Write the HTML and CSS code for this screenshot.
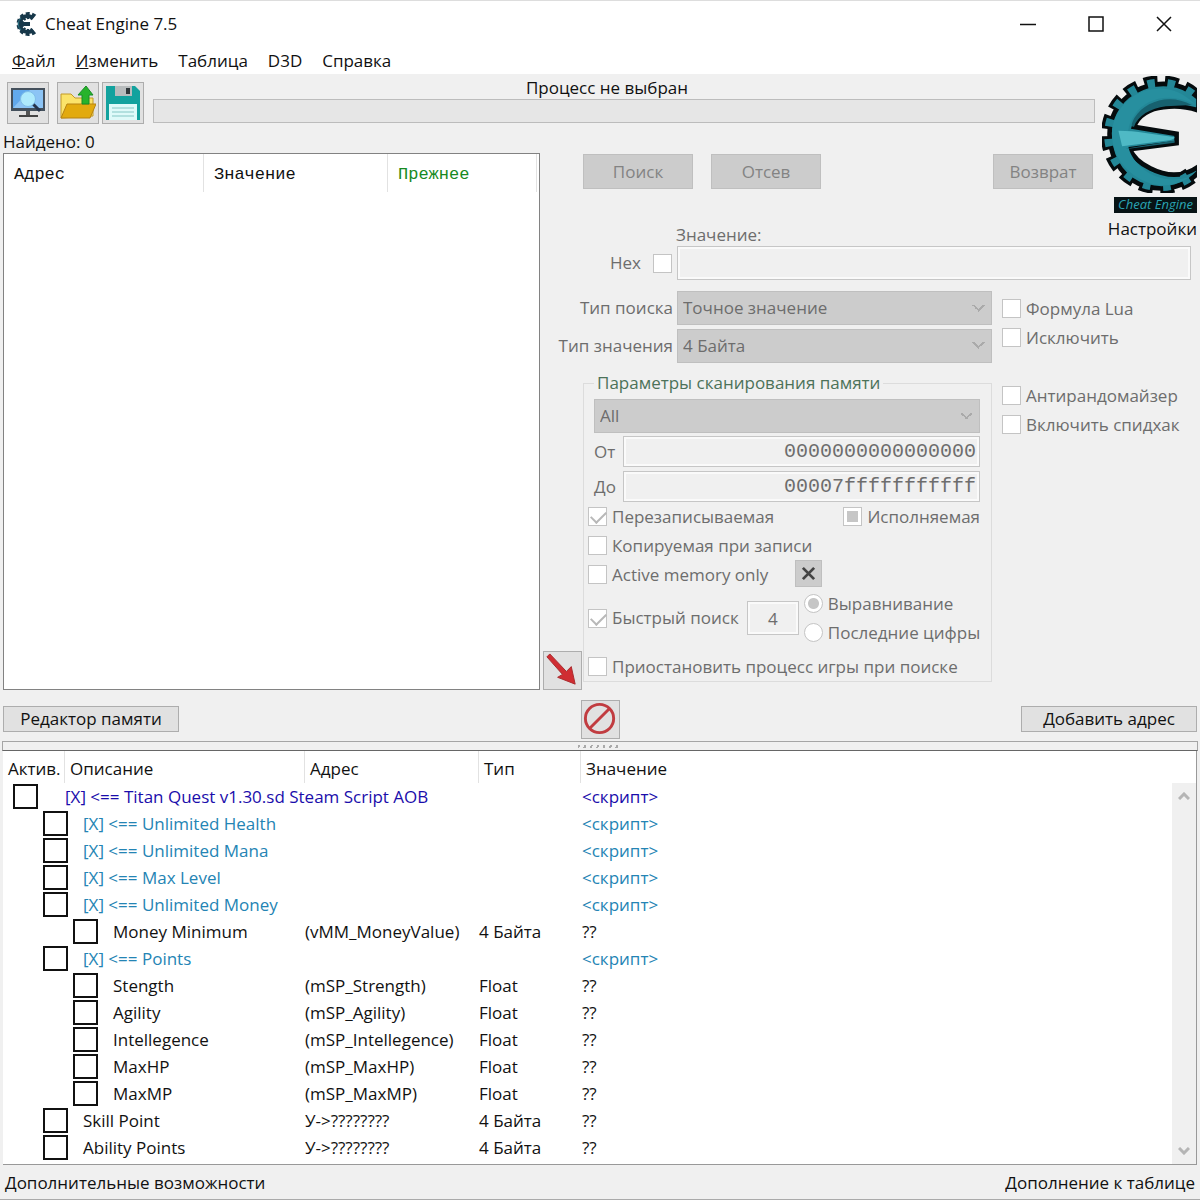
FILE: index.html
```
<!DOCTYPE html>
<html lang="ru">
<head>
    <meta charset="UTF-8">
    <meta name="viewport" content="width=device-width, initial-scale=1.0">
    <title>Cheat Engine 7.5</title>
    <link rel="stylesheet" href="styles.css">
</head>
<body>
    <header class="titlebar">
        <svg class="app-icon" viewBox="0 0 24 24">
            <path d="M21 5.500A8.500 8.500 0 1 0 21 18.500" fill="none" stroke="#17384a" stroke-width="7" stroke-dasharray="3 2"/>
            <path d="M20 6A8 8 0 1 0 20 18M6 12h11" fill="none" stroke="#17384a" stroke-width="4"/>
            <path d="M8 6A8 8 0 0 0 8 18" fill="none" stroke="#2a7486" stroke-width="1"/>
        </svg>
        <h1>Cheat Engine 7.5</h1>
        <div class="window-buttons">
            <button type="button" aria-label="Свернуть"><svg viewBox="0 0 18 18"><path d="M1 9.500h16"/></svg></button>
            <button type="button" aria-label="Развернуть"><svg viewBox="0 0 18 18"><path d="M2 2h14v14H2z"/></svg></button>
            <button type="button" aria-label="Закрыть"><svg viewBox="0 0 18 18"><path d="M2 2l14 14M16 2L2 16"/></svg></button>
        </div>
    </header>

    <nav class="menu">
        <a href="#"><u>Ф</u>айл</a>
        <a href="#"><u>И</u>зменить</a>
        <a href="#">Таблица</a>
        <a href="#">D3D</a>
        <a href="#">Справка</a>
    </nav>

    <main class="workspace">
        <div class="toolbar">
            <button type="button" class="tool" aria-label="Выбрать процесс">
                <svg viewBox="0 0 36 36">
                    <path d="M1 3h34v23H1z" fill="#44505c"/>
                    <path d="M3 5h30v18H3z" fill="#62a9ec"/>
                    <path d="M3 23L20 5h13v18z" fill="#8cc4f5"/>
                    <path d="M16 26h4v5h-4z" fill="#555"/>
                    <path d="M9 30h19v2H9z" fill="#444"/>
                    <path d="M23 19l7 7" stroke="#26334a" stroke-width="3"/>
                    <circle cx="18" cy="14" r="7.500" fill="#aeeafc" stroke="#80bfe9" stroke-width="1"/>
                </svg>
            </button>
            <button type="button" class="tool tool-open" aria-label="Открыть">
                <svg viewBox="0 0 36 36">
                    <path d="M1 33V9h10l4 4h18v18z" fill="#fbe36a" stroke="#c29a28" stroke-width="1"/>
                    <path d="M7 19h29l-6 14H1z" fill="#e2aa0e" stroke="#b78312" stroke-width="1"/>
                    <path d="M26 1l7 9h-4v9h-7v-9h-4z" fill="#27b32b" stroke="#188c26" stroke-width="1"/>
                </svg>
            </button>
            <button type="button" class="tool" aria-label="Сохранить">
                <svg viewBox="0 0 36 36">
                    <path d="M1 1h29l5 5v29H1z" fill="#13a29e"/>
                    <path d="M10 1h17v10H10z" fill="#b8bcbd"/>
                    <path d="M21 3h4v6h-4z" fill="#30373a"/>
                    <path d="M4 19h28v16H4z" fill="#dffaf9"/>
                    <path d="M7 23h22M7 27h22M7 31h22" stroke="#84c7c5" stroke-width="1"/>
                </svg>
            </button>
            <div class="process">
                <span id="process-name">Процесс не выбран</span>
                <div class="progress" role="progressbar" aria-labelledby="process-name"></div>
            </div>
        </div>

        <div class="settings">
            <svg class="logo" viewBox="0 0 285 352">
                <path d="M276 62A153 153 0 1 0 276 292" fill="none" stroke="#050b0d" stroke-width="52" stroke-dasharray="38 21"/>
                <path d="M290 66C240 15 160 12 97 47C44 79 18 132 23 188C27 255 70 316 133 332C192 348 251 333 290 290V272C247 303 196 304 145 278C112 262 91 240 84 220L224 202L224 174L96 153C109 117 145 98 185 94C225 88 252 91 290 104Z" fill="#238797" stroke="#050b0d" stroke-width="14"/>
                <path d="M276 62A153 153 0 1 0 276 292" fill="none" stroke="#238797" stroke-width="32" stroke-dasharray="22 37" stroke-dashoffset="-8"/>
                <path d="M30 185C24 110 88 40 165 38C210 36 246 52 280 86C210 48 132 65 99 115C77 148 80 160 76 190C77 240 113 282 164 302C198 316 238 312 266 302C222 334 162 338 112 309C64 281 33 237 30 185Z" fill="#278f9f"/>
                <path d="M270 87C205 51 128 75 98 125C87 145 86 153 96 153C107 119 145 97 192 91Z" fill="#17616f"/>
                <path d="M49 165C103 165 155 176 218 184C218 188 212 191 202 193L60 211Z" fill="#4fb9c5"/>
                <path d="M70 219L218 194v7L86 218z" fill="#17616f"/>
            </svg>
            <span class="logo-name">Cheat Engine</span>
            <a href="#">Настройки</a>
        </div>

        <section class="found">
            <p>Найдено: 0</p>
            <div class="found-list">
                <table>
                    <thead><tr><th>Адрес</th><th>Значение</th><th class="previous">Прежнее</th></tr></thead>
                </table>
            </div>
        </section>

        <div class="scan-buttons">
            <button type="button" disabled>Поиск</button>
            <button type="button" disabled>Отсев</button>
            <button type="button" class="undo" disabled>Возврат</button>
            <label for="value">Значение:</label>
        </div>

        <form class="scan">
            <div class="value-row">
                <label for="hex">Hex</label>
                <input type="checkbox" id="hex" disabled>
                <input type="text" id="value" disabled>
            </div>
            <div class="types">
                <label for="scan-type">Тип поиска</label>
                <select id="scan-type" disabled><option>Точное значение</option></select>
                <label for="value-type">Тип значения</label>
                <select id="value-type" disabled><option>4 Байта</option></select>
            </div>
            <div class="memory">
                <button type="button" class="add-found" aria-label="Добавить в таблицу">
                    <svg viewBox="0 0 38 38"><path d="M3 5l3-3 17 18 5-5 4 18-18-7 5-3z" fill="#d02d32" stroke="#a92b2e" stroke-width="1"/></svg>
                </button>
                <fieldset disabled>
                    <legend>Параметры сканирования памяти</legend>
                    <select class="region" aria-label="Регион"><option>All</option></select>
                    <div class="range">
                        <label for="from">От</label>
                        <input type="text" id="from" value="0000000000000000">
                        <label for="to">До</label>
                        <input type="text" id="to" value="00007fffffffffff">
                    </div>
                    <div class="checks">
                        <div class="check-row">
                            <label class="check"><input type="checkbox" checked>Перезаписываемая</label>
                            <label class="check"><input type="checkbox" class="partial">Исполняемая</label>
                        </div>
                        <label class="check"><input type="checkbox">Копируемая при записи</label>
                        <div class="check-row active-row">
                            <label class="check"><input type="checkbox">Active memory only</label>
                            <button type="button" class="clear" aria-label="Сбросить"><svg viewBox="0 0 16 16"><path d="M2 2l12 12M14 2L2 14"/></svg></button>
                        </div>
                        <div class="fast">
                            <label class="check"><input type="checkbox" checked>Быстрый поиск</label>
                            <input type="text" class="step" aria-label="Шаг" value="4">
                            <div class="radios">
                                <label class="check"><input type="radio" name="align" checked>Выравнивание</label>
                                <label class="check"><input type="radio" name="align">Последние цифры</label>
                            </div>
                        </div>
                        <label class="check pause"><input type="checkbox">Приостановить процесс игры при поиске</label>
                    </div>
                </fieldset>
            </div>
            <div class="options">
                <label class="check"><input type="checkbox" disabled>Формула Lua</label>
                <label class="check"><input type="checkbox" disabled>Исключить</label>
                <label class="check second"><input type="checkbox" disabled>Антирандомайзер</label>
                <label class="check"><input type="checkbox" disabled>Включить спидхак</label>
            </div>
        </form>
    </main>

    <div class="actions">
        <button type="button" class="wide">Редактор памяти</button>
        <button type="button" class="stop" aria-label="Очистить список">
            <svg viewBox="0 0 38 38"><circle cx="18" cy="18" r="14.500"/><path d="M28 8L8 28"/></svg>
        </button>
        <button type="button" class="wide">Добавить адрес</button>
    </div>
    <div class="splitter"><span></span></div>

    <section class="cheats">
        <table>
            <thead>
                <tr><th class="col-active">Актив.</th><th class="col-name">Описание</th><th class="col-address">Адрес</th><th class="col-type">Тип</th><th>Значение</th></tr>
            </thead>
            <tbody>
                <tr class="root"><td><input type="checkbox" aria-label="Titan Quest"></td><td>[X] &lt;== Titan Quest v1.30.sd Steam Script AOB</td><td></td><td></td><td>&lt;скрипт&gt;</td></tr>
                <tr class="level1 script"><td><input type="checkbox" aria-label="Unlimited Health"></td><td>[X] &lt;== Unlimited Health</td><td></td><td></td><td>&lt;скрипт&gt;</td></tr>
                <tr class="level1 script"><td><input type="checkbox" aria-label="Unlimited Mana"></td><td>[X] &lt;== Unlimited Mana</td><td></td><td></td><td>&lt;скрипт&gt;</td></tr>
                <tr class="level1 script"><td><input type="checkbox" aria-label="Max Level"></td><td>[X] &lt;== Max Level</td><td></td><td></td><td>&lt;скрипт&gt;</td></tr>
                <tr class="level1 script"><td><input type="checkbox" aria-label="Unlimited Money"></td><td>[X] &lt;== Unlimited Money</td><td></td><td></td><td>&lt;скрипт&gt;</td></tr>
                <tr class="level2"><td><input type="checkbox" aria-label="Money Minimum"></td><td>Money Minimum</td><td>(vMM_MoneyValue)</td><td>4 Байта</td><td>??</td></tr>
                <tr class="level1 script"><td><input type="checkbox" aria-label="Points"></td><td>[X] &lt;== Points</td><td></td><td></td><td>&lt;скрипт&gt;</td></tr>
                <tr class="level2"><td><input type="checkbox" aria-label="Stength"></td><td>Stength</td><td>(mSP_Strength)</td><td>Float</td><td>??</td></tr>
                <tr class="level2"><td><input type="checkbox" aria-label="Agility"></td><td>Agility</td><td>(mSP_Agility)</td><td>Float</td><td>??</td></tr>
                <tr class="level2"><td><input type="checkbox" aria-label="Intellegence"></td><td>Intellegence</td><td>(mSP_Intellegence)</td><td>Float</td><td>??</td></tr>
                <tr class="level2"><td><input type="checkbox" aria-label="MaxHP"></td><td>MaxHP</td><td>(mSP_MaxHP)</td><td>Float</td><td>??</td></tr>
                <tr class="level2"><td><input type="checkbox" aria-label="MaxMP"></td><td>MaxMP</td><td>(mSP_MaxMP)</td><td>Float</td><td>??</td></tr>
                <tr class="level1"><td><input type="checkbox" aria-label="Skill Point"></td><td>Skill Point</td><td>У-&gt;????????</td><td>4 Байта</td><td>??</td></tr>
                <tr class="level1"><td><input type="checkbox" aria-label="Ability Points"></td><td>Ability Points</td><td>У-&gt;????????</td><td>4 Байта</td><td>??</td></tr>
            </tbody>
        </table>
        <div class="scrollbar">
            <svg viewBox="0 0 12 8"><path d="M1 7l5-5 5 5"/></svg>
            <svg viewBox="0 0 12 8"><path d="M1 1l5 5 5-5"/></svg>
        </div>
    </section>

    <footer class="status">
        <a href="#">Дополнительные возможности</a>
        <a href="#">Дополнение к таблице</a>
    </footer>
</body>
</html>
```
FILE: styles.css
```
* {
    box-sizing: border-box;
}

body {
    margin: 0;
    min-height: 100vh;
    display: flex;
    flex-direction: column;
    background: #f0f0f0;
    color: #111;
    font-family: "Open Sans", "Noto Sans", sans-serif;
    font-size: 17px;
    line-height: 20px;
}

button, input, select {
    font: inherit;
    color: inherit;
    margin: 0;
    border-radius: 0;
}

button {
    padding: 0;
    background: #e1e1e1;
    border: 1px solid #adadad;
}

a {
    color: inherit;
    text-decoration: none;
}

svg {
    display: block;
}

/* Title and menu */
.titlebar {
    display: flex;
    align-items: center;
    height: 46px;
    padding: 0 2px 0 13px;
    background: #fff;
    border-top: 1px solid #ddd;
}

.titlebar h1 {
    flex: 1;
    margin: 0 0 0 8px;
    font-size: 17px;
    font-weight: normal;
}

.app-icon {
    width: 24px;
    height: 24px;
}

.window-buttons {
    display: flex;
}

.window-buttons button {
    width: 68px;
    height: 40px;
    padding: 0 25px;
    background: none;
    border: none;
}

.window-buttons svg {
    width: 18px;
    height: 18px;
    fill: none;
    stroke: #111;
    stroke-width: 1.5;
}

.menu {
    display: flex;
    gap: 20px;
    height: 28px;
    padding: 5px 12px 3px;
    background: #fff;
}

/* Upper half */
.workspace {
    display: grid;
    grid-template-columns: 45% minmax(0, 1fr) 98px;
    grid-template-rows: 58px 114px auto;
    grid-template-areas:
        "tools tools logo"
        "found buttons logo"
        "found scan scan";
}

.toolbar {
    grid-area: tools;
    display: flex;
    align-items: flex-start;
    padding: 8px 7px 0;
}

.tool {
    width: 42px;
    height: 42px;
    padding: 2px;
}

.tool-open {
    margin: 0 3px 0 8px;
}

.process {
    flex: 1;
    margin-left: 9px;
    text-align: center;
}

.process span {
    display: block;
    height: 17px;
    padding-right: 34px;
    line-height: 12px;
}

.progress {
    height: 24px;
    background: #e6e6e6;
    border: 1px solid #bcbcbc;
}

.settings {
    grid-area: logo;
    display: flex;
    flex-direction: column;
    align-items: flex-end;
    padding: 2px 3px 0 0;
}

.logo {
    width: 95px;
    height: 117px;
}

.logo-name {
    width: 83px;
    height: 16px;
    margin: 4px 0 6px;
    background: #071315;
    color: #2aa3b3;
    font-size: 13px;
    font-style: italic;
    line-height: 14px;
    text-align: center;
    white-space: nowrap;
}

.found {
    grid-area: found;
    display: flex;
    flex-direction: column;
    padding-left: 3px;
}

.found p {
    margin: 0;
    height: 21px;
}

.found-list {
    flex: 1;
    background: #fff;
    border: 1px solid #828282;
    padding-right: 2px;
}

.found-list table {
    width: 100%;
    table-layout: fixed;
    border-spacing: 0;
    font-family: "Liberation Mono", monospace;
}

.found-list th {
    width: 184px;
    height: 38px;
    padding: 3px 0 0 10px;
    font-weight: normal;
    text-align: left;
    border-right: 1px solid #e2e2e2;
}

.found-list th:first-child {
    width: 200px;
}

.found-list .previous {
    width: auto;
    color: #178a22;
}

.scan-buttons {
    grid-area: buttons;
    display: grid;
    grid-template-columns: 110px 110px minmax(0, 1fr);
    grid-template-rows: 35px 1fr;
    column-gap: 18px;
    padding: 22px 9px 0 43px;
    color: #6d6d6d;
}

.scan-buttons button {
    background: #ccc;
    border-color: #bfbfbf;
    color: #838383;
}

.scan-buttons .undo {
    width: 100px;
    justify-self: end;
}

.scan-buttons label {
    grid-column: 1 / -1;
    align-self: end;
    padding: 0 0 1px 93px;
}

/* Scan form */
.scan {
    grid-area: scan;
    display: grid;
    grid-template-columns: minmax(0, 1fr) 198px;
    column-gap: 10px;
    grid-template-rows: 34px 72px auto;
    row-gap: 11px;
    color: #6d6d6d;
}

.value-row {
    grid-column: 1 / -1;
    display: flex;
    align-items: center;
    padding: 0 9px 0 70px;
}

.value-row label {
    width: 43px;
}

input[type="text"] {
    min-width: 0;
    background: #f0f0f0;
    border: 1px solid #c6c6c6;
    box-shadow: inset 0 0 0 2px #fafafa;
}

#value {
    flex: 1;
    height: 34px;
    margin-left: 5px;
}

input[type="checkbox"], input[type="radio"] {
    flex: none;
    appearance: none;
    width: 19px;
    height: 19px;
    background: #fff;
    border: 1px solid #c4c4c4;
}

input[type="radio"] {
    border-radius: 50%;
}

input[type="radio"]:checked {
    background: radial-gradient(circle, #c6c6c6 5px, #fff 6px);
}

.check input[type="checkbox"]:checked::before {
    content: "";
    display: block;
    width: 13px;
    height: 7px;
    margin: 3px 0 0 2px;
    border: solid #b8b8b8;
    border-width: 0 0 2px 2px;
    transform: rotate(-45deg);
}

.check input.partial {
    background: linear-gradient(#c6c6c6, #c6c6c6) center / 11px 11px no-repeat #fff;
}

.types {
    display: grid;
    grid-template-columns: 133px minmax(0, 1fr);
    column-gap: 4px;
    row-gap: 3px;
    align-items: center;
    text-align: right;
}

select {
    appearance: none;
    width: 100%;
    height: 34px;
    padding: 0 5px;
    border: 1px solid #bfbfbf;
    background-color: #ccc;
    background-image: linear-gradient(45deg, transparent 50%, #aaa 50%, #aaa 65%, transparent 65%), linear-gradient(-45deg, transparent 50%, #aaa 50%, #aaa 65%, transparent 65%);
    background-position: right 12px center, right 6px center;
    background-size: 7px 7px;
    background-repeat: no-repeat;
}

select:disabled, input:disabled {
    color: #6d6d6d;
    opacity: 1;
}

.memory {
    grid-column: 1;
    display: flex;
    align-items: flex-end;
}

.add-found {
    flex: none;
    width: 39px;
    height: 39px;
    margin: 0 1px 0 3px;
}

fieldset {
    flex: 1;
    min-width: 0;
    margin: 0 0 8px;
    padding: 7px 11px 0 10px;
    border: 1px solid #dcdcdc;
}

legend {
    padding: 0 3px;
    color: #4c7259;
    font-weight: 500;
    line-height: 18px;
}

.range {
    display: grid;
    grid-template-columns: 29px minmax(0, 1fr);
    row-gap: 4px;
    align-items: center;
    margin-top: 3px;
}

.range input {
    width: 100%;
    height: 31px;
    padding: 0 3px;
    font-family: "Liberation Mono", monospace;
    font-size: 20px;
    text-align: right;
}

.checks {
    margin: 0 -11px 0 -6px;
}

.check {
    display: flex;
    align-items: center;
    gap: 5px;
    height: 29px;
    white-space: nowrap;
}

.check-row {
    display: flex;
    justify-content: space-between;
    padding-right: 11px;
}

.active-row {
    justify-content: flex-start;
    gap: 27px;
}

.clear {
    width: 27px;
    height: 27px;
    padding: 5px;
    background: #ccc;
    border-color: #bfbfbf;
}

.clear svg {
    stroke: #444;
    stroke-width: 3;
}

.fast {
    display: flex;
    align-items: center;
}

.step {
    width: 52px;
    height: 34px;
    margin: 0 5px 0 8px;
    text-align: center;
}

.pause {
    margin-top: 5px;
}

.options {
    grid-column: 2;
    grid-row: 2 / 4;
    padding-top: 3px;
}

.options .second {
    margin-top: 29px;
}

/* Buttons between the two halves */
.actions {
    display: grid;
    grid-template-columns: 1fr auto 1fr;
    align-items: center;
    height: 51px;
    padding: 7px 3px 0;
}

.wide {
    width: 176px;
    height: 26px;
    line-height: 22px;
}

.wide:last-child {
    justify-self: end;
}

.stop {
    width: 39px;
    height: 39px;
}

.stop svg {
    fill: none;
    stroke: #c13c40;
    stroke-width: 3;
}

.splitter {
    display: flex;
    justify-content: center;
    align-items: center;
    height: 10px;
    margin: 0 2px;
    border: 1px solid #a5a5a5;
    border-bottom: 1px solid #666;
}

.splitter span {
    width: 44px;
    height: 3px;
    background: repeating-linear-gradient(110deg, #aaa 0 2px, #f0f0f0 2px 6px);
}

/* Cheat table */
.cheats {
    flex: 1;
    display: flex;
    margin: 0 3px;
    background: #fff;
    border-right: 1px solid #999;
    border-bottom: 1px solid #999;
}

.cheats table {
    flex: 1;
    align-self: flex-start;
    width: 100%;
    table-layout: fixed;
    border-spacing: 0;
    white-space: nowrap;
}

.cheats th {
    height: 32px;
    padding: 4px 0 0 5px;
    font-weight: normal;
    text-align: left;
    border-right: 1px solid #e2e2e2;
}

.cheats th:last-child {
    border: none;
}

.cheats .col-active { width: 62px; }
.cheats .col-name { width: 240px; }
.cheats .col-address { width: 174px; }
.cheats .col-type { width: 102px; }

.cheats td {
    height: 27px;
    padding: 0;
}

.cheats td:last-child {
    padding-left: 1px;
}

.cheats td input {
    display: block;
    width: 25px;
    height: 25px;
    margin-left: 10px;
    border: 2px solid #111;
}

.cheats .level1 input { margin-left: 40px; }
.cheats .level2 input { margin-left: 70px; }

.level1 td:nth-child(2) { padding-left: 18px; }
.level2 td:nth-child(2) { padding-left: 48px; }

.root { color: #1a0dab; }
.script { color: #2484b4; }

.scrollbar {
    display: flex;
    flex: none;
    flex-direction: column;
    justify-content: space-between;
    align-items: center;
    width: 24px;
    margin-top: 32px;
    padding: 9px 0;
    background: #f0f0f0;
}

.scrollbar svg {
    width: 12px;
    height: 8px;
    fill: none;
    stroke: #b5b5b5;
    stroke-width: 3;
}

.status {
    display: flex;
    justify-content: space-between;
    align-items: center;
    height: 35px;
    padding: 2px 5px 0;
    border-bottom: 1px solid #aaa;
}
```
